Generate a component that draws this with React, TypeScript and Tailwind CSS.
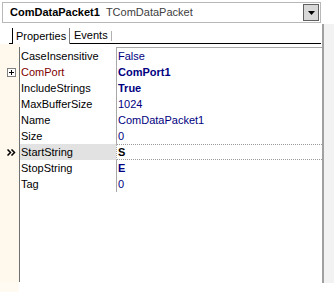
import React from "react";

type Prop = {
  name: string;
  value: string;
  expandable?: boolean;
  bold?: boolean;
  selected?: boolean;
};

const props: Prop[] = [
  { name: "CaseInsensitive", value: "False" },
  { name: "ComPort", value: "ComPort1", expandable: true, bold: true },
  { name: "IncludeStrings", value: "True", bold: true },
  { name: "MaxBufferSize", value: "1024" },
  { name: "Name", value: "ComDataPacket1" },
  { name: "Size", value: "0" },
  { name: "StartString", value: "S", bold: true, selected: true },
  { name: "StopString", value: "E", bold: true },
  { name: "Tag", value: "0" },
];

const PlusBox = () => (
  <svg width="9" height="9" viewBox="0 0 9 9" className="block">
    <rect x="0.5" y="0.5" width="8" height="8" fill="#ffffff" stroke="#808080" />
    <path d="M2 4.5h5M4.5 2v5" stroke="#000000" strokeWidth="1" />
  </svg>
);

const Chevrons = () => (
  <svg width="9" height="7" viewBox="0 0 9 7" className="block">
    <path d="M0.5 0.5l3 3-3 3M4.5 0.5l3 3-3 3" fill="none" stroke="#000000" strokeWidth="1.5" />
  </svg>
);

function Row({ p }: { p: Prop }) {
  return (
    <div className="flex h-[16px]">
      <div className="flex w-[20px] shrink-0 items-center border-r border-[#707070] bg-[#fff8ec]">
        {p.expandable && (
          <div className="ml-[7px]">
            <PlusBox />
          </div>
        )}
        {p.selected && (
          <div className="ml-[7px]">
            <Chevrons />
          </div>
        )}
      </div>
      <div
        className={
          p.selected
            ? "flex w-[96px] shrink-0 items-center bg-[#e2e2e2] pl-[1px]"
            : "flex w-[96px] shrink-0 items-center pl-[1px]"
        }
      >
        <span className={p.expandable ? "text-[#800000]" : "text-black"}>{p.name}</span>
      </div>
      <div
        className={
          p.selected
            ? "flex flex-1 items-center border-l border-y border-dotted border-y-[#9a9a9a] border-l-[#a8a8a8] pl-[1px]"
            : "flex flex-1 items-center border-l border-[#a8a8a8] pl-[1px]"
        }
      >
        <span
          className={
            (p.bold ? "font-bold " : "") + (p.selected ? "text-black" : "text-[#000080]")
          }
        >
          {p.value}
        </span>
      </div>
    </div>
  );
}

export default function App() {
  return (
    <div
      className="flex h-[292px] w-[334px] overflow-hidden bg-white text-[11px] leading-none"
      style={{ fontFamily: '"Liberation Sans", Arial, sans-serif' }}
    >
      <div className="flex w-[322px] shrink-0 flex-col">
        {/* component selector */}
        <div className="ml-[2px] mr-[1px] mt-[2px] flex h-[21px] items-center border border-[#b8b8b8] bg-white pl-[7px]">
          <span className="font-bold text-black">ComDataPacket1</span>
          <span className="ml-[6px] text-[#404040]">TComDataPacket</span>
          <div className="ml-auto mr-[1px] flex h-[17px] w-[16px] items-center justify-center border border-[#606060] bg-[#d8d8d8]">
            <svg width="7" height="4" viewBox="0 0 7 4">
              <path d="M0 0h7L3.5 4z" fill="#000000" />
            </svg>
          </div>
        </div>

        {/* tabs */}
        <div className="flex h-[21px] items-end pl-[9px] pr-[1px]">
          <div className="h-[1px] w-[3px] bg-black" />
          <div className="flex h-[16px] w-[58px] items-center border-l border-r border-l-black border-r-[#808080] pl-[3px]">
            Properties
          </div>
          <div className="flex h-[16px] flex-1 items-center border-b border-black pl-[4px]">
            <span>Events</span>
            <div className="ml-[3px] h-[10px] w-[1px] bg-[#b0b0b0]" />
          </div>
        </div>

        {/* grid */}
        <div className="flex flex-1 flex-col">
          <div className="flex h-[3px]">
            <div className="w-[20px] bg-[#fff8ec]" />
          </div>
          <div className="flex h-[1px]">
            <div className="w-[20px] border-r border-[#707070] bg-[#fff8ec]" />
            <div className="w-[96px]" />
            <div className="flex-1 bg-[#a8a8a8]" />
          </div>
          {props.map((p) => (
            <Row key={p.name} p={p} />
          ))}
          <div className="flex h-[90px]">
            <div className="w-[20px] border-r border-[#707070] bg-[#fff8ec]" />
          </div>
          <div className="flex flex-1">
            <div className="w-[19px] bg-[#fffbf3]" />
          </div>
        </div>
      </div>

      <div className="flex flex-1 flex-col">
        <div className="h-[24px] bg-white" />
        <div className="h-[259px] border-l-2 border-[#a0a0a0] bg-[#f2f2f2]" />
        <div className="flex-1 bg-white" />
      </div>
    </div>
  );
}
